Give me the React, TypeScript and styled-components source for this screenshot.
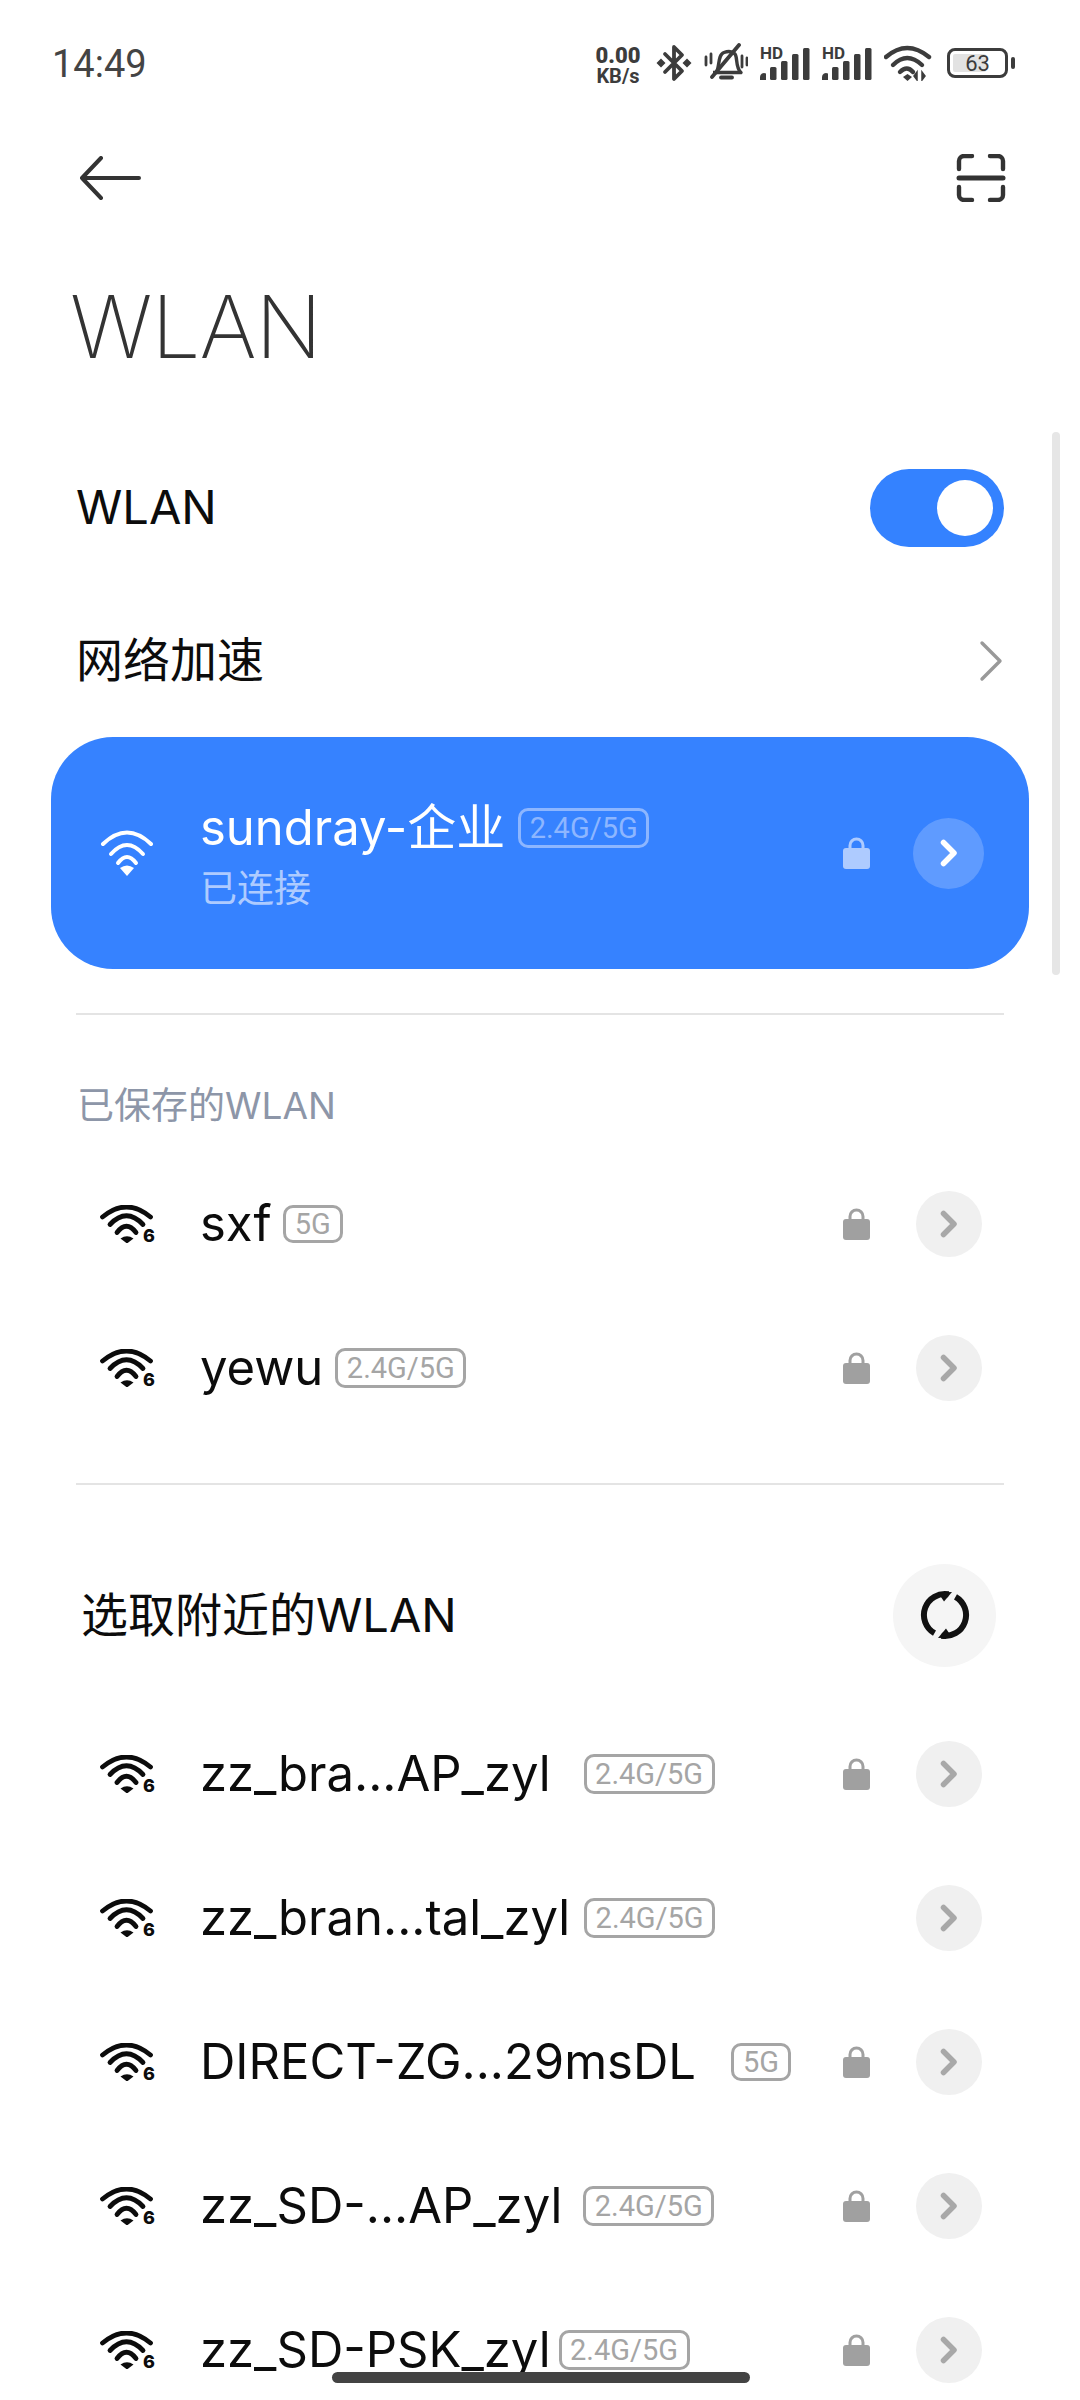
import styled, { createGlobalStyle } from 'styled-components';

const GlobalStyle = createGlobalStyle`
  html, body {
    margin: 0;
    padding: 0;
    background: #fff;
  }
  * {
    box-sizing: border-box;
  }
`;

const font = `Inter, "Noto Sans CJK SC", sans-serif`;

const WifiSix = () => (
  <WifiWrap>
    <svg width="54" height="38" viewBox="0 0 54 38" fill="none">
      <g stroke="#0c0c0c" strokeWidth="4.8" strokeLinecap="round">
        <path d="M2.5 12Q26.5 -8 50.5 12" />
        <path d="M10 19.5Q26.5 2 43 19.5" />
        <path d="M17 27.5Q26.5 15 36 27.5" />
      </g>
      <path d="M20.5 33.5Q27 29 33.5 33.5L27 38.5z" fill="#0c0c0c" />
    </svg>
    <SixMark>6</SixMark>
  </WifiWrap>
);

const WifiWhite = () => (
  <svg width="54" height="46" viewBox="0 0 54 46" fill="none">
    <g stroke="#fff" strokeWidth="4" strokeLinecap="round">
      <path d="M3 14Q27 -9 51 14" />
      <path d="M11 24Q27 6 43 24" />
      <path d="M18 33Q27 21 36 33" />
    </g>
    <path d="M20 38Q27 33 34 38L27 46z" fill="#fff" />
  </svg>
);

const Lock = ({ color }: { color: string }) => (
  <svg width="27" height="32" viewBox="0 0 27 32" fill="none">
    <path d="M7 13V8.5a6.5 6.5 0 0 1 13 0V13" stroke={color} strokeWidth="3" />
    <rect x="0" y="11" width="27" height="21" rx="3" fill={color} />
  </svg>
);

const Chevron = ({ color }: { color: string }) => (
  <svg width="18" height="28" viewBox="0 0 18 28" fill="none">
    <path d="M3.5 3.5L14 14L3.5 24.5" stroke={color} strokeWidth="5.5" strokeLinecap="round" strokeLinejoin="round" />
  </svg>
);

const Signal = () => (
  <SignalWrap>
    <HdLabel>HD</HdLabel>
    <svg width="50" height="33" viewBox="0 0 50 33" fill="#3c3c3c">
      <path d="M0 33v-3a4 4 0 0 1 6 -3.5v6.5z" />
      <rect x="10" y="20" width="6.5" height="13" rx="1.5" />
      <rect x="21" y="14" width="6.5" height="19" rx="1.5" />
      <rect x="32" y="7" width="6.5" height="26" rx="1.5" />
      <rect x="43" y="1" width="6.5" height="32" rx="1.5" />
    </svg>
  </SignalWrap>
);

const RefreshArc = () => (
  <>
    <path d="M28.6 4.3A21 21 0 0 0 14.5 43.2" stroke="#111" strokeWidth="6" />
    <path d="M32 2L18 2.5L24 11.5z" fill="#111" />
  </>
);

const networks = [
  { name: 'zz_bra...AP_zyl', badge: '2.4G/5G', lock: true, gap: 33 },
  { name: 'zz_bran...tal_zyl', badge: '2.4G/5G', lock: false, gap: 14 },
  { name: 'DIRECT-ZG...29msDL', badge: '5G', lock: true, gap: 35 },
  { name: 'zz_SD-...AP_zyl', badge: '2.4G/5G', lock: true, gap: 21 },
  { name: 'zz_SD-PSK_zyl', badge: '2.4G/5G', lock: true, gap: 8 },
];

const App = () => {
  return (
    <Page>
      <GlobalStyle />
      <StatusBar>
        <Time>14:49</Time>
        <StatusIcons>
          <Speed>
            <b>0.00</b>
            <span>KB/s</span>
          </Speed>
          <svg width="36" height="40" viewBox="0 0 36 40" fill="none">
            <path d="M9 11L26 28L18 36V4L26 12L9 29" stroke="#3c3c3c" strokeWidth="3.8" strokeLinejoin="round" strokeLinecap="round" />
            <path d="M5 15.5L9.5 20L5 24.5L0.5 20z M31 15.5L35.5 20L31 24.5L26.5 20z" fill="#3c3c3c" />
          </svg>
          <svg width="44" height="40" viewBox="0 0 44 40" fill="none">
            <path d="M12 29C16 26 13 12 20 9.5C24 8 28 8 31 11C34 15 31 24 37 29.5H9" stroke="#3c3c3c" strokeWidth="3.4" strokeLinejoin="round" />
            <path d="M17 34.5H28" stroke="#3c3c3c" strokeWidth="3.8" strokeLinecap="round" />
            <path d="M8 34L35 2" stroke="#3c3c3c" strokeWidth="3.8" strokeLinecap="round" />
            <path d="M2 14V22M7 11V20M38 13V24M43 15V22" stroke="#3c3c3c" strokeWidth="2.8" strokeLinecap="round" />
          </svg>
          <Signal />
          <Signal />
          <svg width="48" height="36" viewBox="0 0 48 36" fill="none">
            <g stroke="#3c3c3c" strokeWidth="4.4" strokeLinecap="round">
              <path d="M2 12Q23 -6 45 12" />
              <path d="M9 20Q23 6 38 20" />
              <path d="M16 27Q23 20 29 27" />
            </g>
            <path d="M19 32L23.5 29L28 32L23.5 36z" fill="#3c3c3c" />
            <path d="M33 35V27L30 31zM38 27V35L41 31z" fill="#3c3c3c" stroke="#3c3c3c" strokeWidth="1.5" />
          </svg>
          <Battery>
            <BatteryBody>
              <BatteryFill />
              <BatteryText>63</BatteryText>
            </BatteryBody>
            <BatteryNub />
          </Battery>
        </StatusIcons>
      </StatusBar>

      <NavBar>
        <svg width="62" height="44" viewBox="0 0 62 44" fill="none">
          <path d="M22 2L3 22L22 42M3 22H60" stroke="#333" strokeWidth="4" strokeLinecap="round" strokeLinejoin="round" />
        </svg>
        <svg width="50" height="48" viewBox="0 0 50 48" fill="none">
          <path
            d="M3 15V7a5 5 0 0 1 5 -5h8M34 2h8a5 5 0 0 1 5 5v8M3 33v8a5 5 0 0 0 5 5h8M34 46h8a5 5 0 0 0 5 -5v-8"
            stroke="#333"
            strokeWidth="4.4"
            strokeLinecap="round"
          />
          <path d="M3 24H47" stroke="#333" strokeWidth="5" strokeLinecap="round" />
        </svg>
      </NavBar>

      <Title>WLAN</Title>

      <SettingRow>
        <SettingLabel>WLAN</SettingLabel>
        <Switch>
          <Knob />
        </Switch>
      </SettingRow>
      <SettingRow>
        <SettingLabel>网络加速</SettingLabel>
        <svg width="26" height="42" viewBox="0 0 26 42" fill="none">
          <path d="M4 3L22 21L4 39" stroke="#999" strokeWidth="3.4" strokeLinecap="round" strokeLinejoin="round" />
        </svg>
      </SettingRow>

      <ConnectedCard>
        <WifiWhite />
        <ConnectedText>
          <NameLine $gap={13}>
            <NetworkName $light>sundray-企业</NetworkName>
            <Badge $light $wide>2.4G/5G</Badge>
          </NameLine>
          <ConnectedState>已连接</ConnectedState>
        </ConnectedText>
        <LockSlot>
          <Lock color="#aecbff" />
        </LockSlot>
        <ArrowButton $light>
          <Chevron color="#fff" />
        </ArrowButton>
      </ConnectedCard>

      <Divider $top={44} />

      <SavedHeader>已保存的WLAN</SavedHeader>
      <NetworkRow>
        <WifiSix />
        <NameLine $gap={11}>
          <NetworkName>sxf</NetworkName>
          <Badge>5G</Badge>
        </NameLine>
        <LockSlot>
          <Lock color="#a0a0a0" />
        </LockSlot>
        <ArrowButton>
          <Chevron color="#a8a8a8" />
        </ArrowButton>
      </NetworkRow>
      <NetworkRow>
        <WifiSix />
        <NameLine $gap={12}>
          <NetworkName>yewu</NetworkName>
          <Badge $wide>2.4G/5G</Badge>
        </NameLine>
        <LockSlot>
          <Lock color="#a0a0a0" />
        </LockSlot>
        <ArrowButton>
          <Chevron color="#a8a8a8" />
        </ArrowButton>
      </NetworkRow>

      <Divider $top={43} />

      <NearbyHeader>
        <NearbyTitle>选取附近的WLAN</NearbyTitle>
        <RefreshButton>
          <svg width="50" height="50" viewBox="0 0 50 50" fill="none">
            <RefreshArc />
            <g transform="rotate(180 25 25)">
              <RefreshArc />
            </g>
          </svg>
        </RefreshButton>
      </NearbyHeader>

      {networks.map((network) => (
        <NetworkRow key={network.name}>
          <WifiSix />
          <NameLine $gap={network.gap}>
            <NetworkName>{network.name}</NetworkName>
            <Badge $wide={network.badge !== '5G'}>{network.badge}</Badge>
          </NameLine>
          <LockSlot>{network.lock && <Lock color="#a0a0a0" />}</LockSlot>
          <ArrowButton>
            <Chevron color="#a8a8a8" />
          </ArrowButton>
        </NetworkRow>
      ))}

      <Scrollbar />
      <HomeIndicator />
    </Page>
  );
};

export default App;

const Page = styled.div`
  position: relative;
  width: 1080px;
  height: 2400px;
  overflow: hidden;
  background: #fff;
  font-family: ${font};
  color: #0c0c0c;
`;

const StatusBar = styled.div`
  display: flex;
  align-items: center;
  justify-content: space-between;
  height: 126px;
  padding: 0 65px 0 52px;
`;

const Time = styled.div`
  font-family: Roboto, sans-serif;
  font-size: 38px;
  font-weight: 400;
  color: #444;
  padding-top: 2px;
`;

const StatusIcons = styled.div`
  display: flex;
  align-items: center;
  gap: 12px;
`;

const Speed = styled.div`
  display: flex;
  flex-direction: column;
  align-items: center;
  width: 48px;
  padding-top: 6px;
  margin-right: 2px;
  color: #3c3c3c;
  font-family: Roboto, sans-serif;
  font-weight: 700;

  b {
    display: block;
    font-size: 22px;
    line-height: 20px;
  }

  span {
    display: block;
    font-size: 20px;
    line-height: 21px;
    white-space: nowrap;
  }
`;

const SignalWrap = styled.div`
  position: relative;
  width: 50px;
  height: 33px;
`;

const HdLabel = styled.span`
  position: absolute;
  left: 0;
  top: -1px;
  font-family: Roboto, sans-serif;
  font-size: 17px;
  line-height: 15px;
  font-weight: 700;
  color: #3c3c3c;
`;

const Battery = styled.div`
  display: flex;
  align-items: center;
  gap: 3px;
  margin-left: 3px;
`;

const BatteryBody = styled.div`
  position: relative;
  display: flex;
  align-items: center;
  justify-content: center;
  width: 61px;
  height: 30px;
  border: 3px solid #3c3c3c;
  border-radius: 8px;
  overflow: hidden;
`;

const BatteryFill = styled.div`
  position: absolute;
  left: 3px;
  top: 3px;
  bottom: 3px;
  width: 33px;
  background: #e2e2e2;
  border-radius: 2px;
`;

const BatteryText = styled.span`
  position: relative;
  font-family: Roboto, sans-serif;
  font-size: 22px;
  color: #3c3c3c;
`;

const BatteryNub = styled.div`
  width: 4px;
  height: 12px;
  background: #3c3c3c;
  border-radius: 2px;
`;

const NavBar = styled.div`
  display: flex;
  align-items: center;
  justify-content: space-between;
  height: 104px;
  padding: 0 74px 0 79px;
`;

const Title = styled.h1`
  margin: 0;
  height: 201px;
  padding: 44px 0 0 70px;
  font-size: 87px;
  line-height: 106px;
  font-weight: 200;
  letter-spacing: -1px;
  color: #333;
`;

const SettingRow = styled.div`
  display: flex;
  align-items: center;
  justify-content: space-between;
  height: 153px;
  padding: 0 76px;
`;

const SettingLabel = styled.div`
  font-size: 47px;
  line-height: 56px;
  padding-bottom: 2px;
`;

const Switch = styled.div`
  display: flex;
  align-items: center;
  justify-content: flex-end;
  width: 134px;
  height: 78px;
  padding-right: 11px;
  border-radius: 39px;
  background: #3482ff;
`;

const Knob = styled.div`
  width: 56px;
  height: 56px;
  border-radius: 50%;
  background: #fff;
`;

const NetworkRow = styled.div`
  display: flex;
  align-items: center;
  gap: 46px;
  height: 144px;
  padding: 0 98px 0 100px;
`;

const WifiWrap = styled.div`
  position: relative;
  flex: none;
  width: 54px;
  height: 38px;
`;

const SixMark = styled.span`
  position: absolute;
  right: -1px;
  bottom: -1px;
  font-size: 18px;
  line-height: 16px;
  font-weight: 800;
  color: #0c0c0c;
`;

const ConnectedCard = styled.div`
  display: flex;
  align-items: center;
  gap: 46px;
  height: 232px;
  margin: 0 51px;
  padding: 0 45px 0 49px;
  border-radius: 62px;
  background: #3682ff;
`;

const ConnectedText = styled.div`
  display: flex;
  flex-direction: column;
  gap: 7px;
  padding-top: 5px;
`;

const ConnectedState = styled.div`
  font-size: 37px;
  line-height: 48px;
  color: #aecbff;
`;

const NameLine = styled.div<{ $gap: number }>`
  display: flex;
  align-items: center;
  gap: ${(props) => props.$gap}px;
`;

const NetworkName = styled.div<{ $light?: boolean }>`
  font-size: 49px;
  line-height: 60px;
  white-space: nowrap;
  color: ${(props) => (props.$light ? '#fff' : '#0c0c0c')};
`;

const Badge = styled.div<{ $light?: boolean; $wide?: boolean }>`
  display: flex;
  align-items: center;
  justify-content: center;
  height: ${(props) => (props.$wide ? 40 : 38)}px;
  width: ${(props) => (props.$wide ? 131 : 60)}px;
  border: 3px solid ${(props) => (props.$light ? '#8db6ff' : '#a5a5a5')};
  border-radius: 10px;
  font-family: Roboto, sans-serif;
  font-size: 29px;
  color: ${(props) => (props.$light ? '#8db6ff' : '#a5a5a5')};
`;

const LockSlot = styled.div`
  display: flex;
  width: 27px;
  height: 32px;
  margin-left: auto;
`;

const ArrowButton = styled.div<{ $light?: boolean }>`
  display: flex;
  align-items: center;
  justify-content: center;
  width: ${(props) => (props.$light ? 71 : 66)}px;
  height: ${(props) => (props.$light ? 71 : 66)}px;
  margin-left: ${(props) => (props.$light ? -3 : 0)}px;
  border-radius: 50%;
  background: ${(props) => (props.$light ? '#5f9bff' : '#f0f0f0')};
`;

const Divider = styled.div<{ $top: number }>`
  height: 1.5px;
  margin: ${(props) => props.$top}px 76px 0;
  background: #e4e4e4;
`;

const SavedHeader = styled.div`
  height: 137.5px;
  padding: 67px 0 0 77px;
  font-size: 37px;
  line-height: 48px;
  color: #8d96a8;
`;

const NearbyHeader = styled.div`
  display: flex;
  align-items: center;
  justify-content: space-between;
  height: 217px;
  padding: 44px 84px 0 81px;
`;

const NearbyTitle = styled.div`
  font-size: 47px;
  line-height: 56px;
`;

const RefreshButton = styled.div`
  display: flex;
  align-items: center;
  justify-content: center;
  width: 103px;
  height: 103px;
  border-radius: 50%;
  background: #f5f5f5;
`;

const Scrollbar = styled.div`
  position: absolute;
  left: 1052px;
  top: 432px;
  width: 8px;
  height: 543px;
  border-radius: 4px;
  background: #e6e6e6;
`;

const HomeIndicator = styled.div`
  position: absolute;
  left: 332px;
  top: 2372px;
  width: 418px;
  height: 11px;
  border-radius: 6px;
  background: #434343;
`;
